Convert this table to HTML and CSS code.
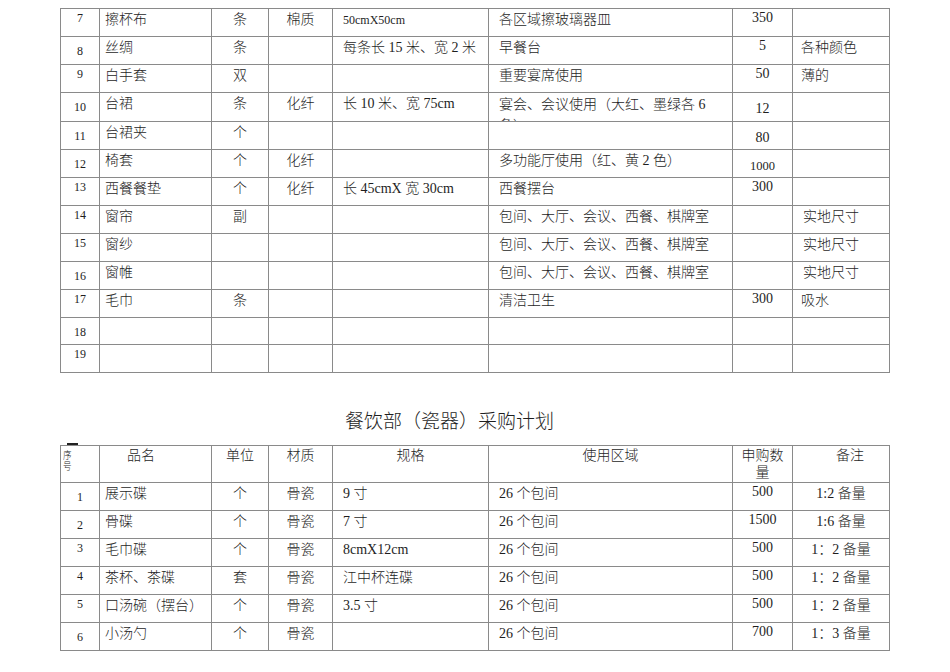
FILE: index.html
```html
<!DOCTYPE html>
<html lang="zh-CN">
<head>
<meta charset="utf-8">
<title>餐饮部采购计划</title>
<link rel="stylesheet" href="styles.css">
</head>
<body>
<div class="page">
  <table class="grid">
    <colgroup>
      <col class="w-seq"><col class="w-name"><col class="w-unit"><col class="w-mat"><col class="w-spec"><col class="w-area"><col class="w-qty"><col class="w-rem">
    </colgroup>
    <tbody>
      <tr><td class="seq sa">7</td><td class="name">擦杯布</td><td class="unit">条</td><td class="mat">棉质</td><td class="spec"><span class="small">50cmX50cm</span></td><td class="area">各区域擦玻璃器皿</td><td class="qty qa">350</td><td class="rem"></td></tr>
      <tr><td class="seq sb">8</td><td class="name">丝绸</td><td class="unit">条</td><td class="mat"></td><td class="spec">每条长 15 米、宽 2 米</td><td class="area">早餐台</td><td class="qty qa">5</td><td class="rem">各种颜色</td></tr>
      <tr><td class="seq sa">9</td><td class="name">白手套</td><td class="unit">双</td><td class="mat"></td><td class="spec"></td><td class="area">重要宴席使用</td><td class="qty qa">50</td><td class="rem">薄的</td></tr>
      <tr><td class="seq sb">10</td><td class="name">台裙</td><td class="unit">条</td><td class="mat">化纤</td><td class="spec">长 10 米、宽 75cm</td><td class="area"><div class="clip">宴会、会议使用（大红、墨绿各 6 条）</div></td><td class="qty qb">12</td><td class="rem"></td></tr>
      <tr><td class="seq sb">11</td><td class="name">台裙夹</td><td class="unit">个</td><td class="mat"></td><td class="spec"></td><td class="area"></td><td class="qty qb">80</td><td class="rem"></td></tr>
      <tr><td class="seq sb">12</td><td class="name">椅套</td><td class="unit">个</td><td class="mat">化纤</td><td class="spec"></td><td class="area">多功能厅使用（红、黄 2 色）</td><td class="qty qb"><span class="num-small">1000</span></td><td class="rem"></td></tr>
      <tr><td class="seq sa">13</td><td class="name">西餐餐垫</td><td class="unit">个</td><td class="mat">化纤</td><td class="spec">长 45cmX 宽 30cm</td><td class="area">西餐摆台</td><td class="qty qa">300</td><td class="rem"></td></tr>
      <tr><td class="seq sa">14</td><td class="name">窗帘</td><td class="unit">副</td><td class="mat"></td><td class="spec"></td><td class="area">包间、大厅、会议、西餐、棋牌室</td><td class="qty"></td><td class="rem rem-in">实地尺寸</td></tr>
      <tr><td class="seq sa">15</td><td class="name">窗纱</td><td class="unit"></td><td class="mat"></td><td class="spec"></td><td class="area">包间、大厅、会议、西餐、棋牌室</td><td class="qty"></td><td class="rem rem-in">实地尺寸</td></tr>
      <tr><td class="seq sb">16</td><td class="name">窗帷</td><td class="unit"></td><td class="mat"></td><td class="spec"></td><td class="area">包间、大厅、会议、西餐、棋牌室</td><td class="qty"></td><td class="rem rem-in">实地尺寸</td></tr>
      <tr><td class="seq sa">17</td><td class="name">毛巾</td><td class="unit">条</td><td class="mat"></td><td class="spec"></td><td class="area">清洁卫生</td><td class="qty qa">300</td><td class="rem">吸水</td></tr>
      <tr class="short"><td class="seq sb">18</td><td class="name"></td><td class="unit"></td><td class="mat"></td><td class="spec"></td><td class="area"></td><td class="qty"></td><td class="rem"></td></tr>
      <tr><td class="seq sa">19</td><td class="name"></td><td class="unit"></td><td class="mat"></td><td class="spec"></td><td class="area"></td><td class="qty"></td><td class="rem"></td></tr>
    </tbody>
  </table>

  <h2 class="title">餐饮部（瓷器）采购计划</h2>

  <div class="table-wrap">
    <span class="dash"></span>
    <table class="grid">
      <colgroup>
        <col class="w-seq"><col class="w-name"><col class="w-unit"><col class="w-mat"><col class="w-spec"><col class="w-area"><col class="w-qty"><col class="w-rem">
      </colgroup>
      <thead>
        <tr class="head">
          <th class="h-seq"><span class="seq-label">序<br>号</span></th>
          <th class="h-name">品名</th>
          <th class="h-mid">单位</th>
          <th class="h-mid">材质</th>
          <th class="h-mid">规格</th>
          <th class="h-mid">使用区域</th>
          <th class="h-qty">申购数量</th>
          <th class="h-rem">备注</th>
        </tr>
      </thead>
      <tbody>
        <tr><td class="seq sb">1</td><td class="name">展示碟</td><td class="unit">个</td><td class="mat">骨瓷</td><td class="spec">9 寸</td><td class="area">26 个包间</td><td class="qty qa">500</td><td class="rem rem-c">1:2 备量</td></tr>
        <tr><td class="seq sb">2</td><td class="name">骨碟</td><td class="unit">个</td><td class="mat">骨瓷</td><td class="spec">7 寸</td><td class="area">26 个包间</td><td class="qty qa">1500</td><td class="rem rem-c">1:6 备量</td></tr>
        <tr><td class="seq sa">3</td><td class="name">毛巾碟</td><td class="unit">个</td><td class="mat">骨瓷</td><td class="spec">8cmX12cm</td><td class="area">26 个包间</td><td class="qty qa">500</td><td class="rem rem-c">1：2 备量</td></tr>
        <tr><td class="seq sa">4</td><td class="name">茶杯、茶碟</td><td class="unit">套</td><td class="mat">骨瓷</td><td class="spec">江中杯连碟</td><td class="area">26 个包间</td><td class="qty qa">500</td><td class="rem rem-c">1：2 备量</td></tr>
        <tr><td class="seq sa">5</td><td class="name">口汤碗（摆台）</td><td class="unit">个</td><td class="mat">骨瓷</td><td class="spec">3.5 寸</td><td class="area">26 个包间</td><td class="qty qa">500</td><td class="rem rem-c">1：2 备量</td></tr>
        <tr><td class="seq sb">6</td><td class="name">小汤勺</td><td class="unit">个</td><td class="mat">骨瓷</td><td class="spec"></td><td class="area">26 个包间</td><td class="qty qa">700</td><td class="rem rem-c">1：3 备量</td></tr>
      </tbody>
    </table>
  </div>
</div>
</body>
</html>
```

FILE: styles.css
```css
html, body {
  margin: 0;
  padding: 0;
  background: #ffffff;
}

body {
  font-family: "Liberation Serif", "Noto Sans CJK SC", serif;
  color: #1e1e1e;
  font-size: 14px;
}

.page {
  padding: 8px 0 0 60px;
}

.grid {
  border-collapse: collapse;
  table-layout: fixed;
  width: 830px;
}

.grid td,
.grid th {
  border: 1px solid #8a8a8a;
  padding: 1px 4px 0 5px;
  vertical-align: top;
  line-height: 20px;
  font-weight: 300;
  text-align: left;
  overflow: hidden;
}

.grid tr { height: 28px; }
.grid tr.short { height: 27px; }

.w-seq { width: 39px; }
.w-name { width: 112px; }
.w-unit { width: 57px; }
.w-mat { width: 64px; }
.w-spec { width: 156px; }
.w-area { width: 244px; }
.w-qty { width: 60px; }
.w-rem { width: 97px; }

.grid td.seq {
  text-align: center;
  font-size: 12px;
  line-height: 16px;
  padding-left: 2px;
  padding-right: 2px;
}
.grid td.sa { padding-top: 1px; }
.grid td.sb { padding-top: 6px; }

.grid td.name { padding-left: 5px; }
.grid td.unit,
.grid td.mat { text-align: center; padding-left: 2px; padding-right: 2px; }
.grid td.spec { padding-left: 10px; }
.grid td.area { padding-left: 10px; padding-right: 17px; }

.grid td.qty {
  text-align: center;
  font-size: 14px;
  line-height: 16px;
  padding-left: 2px;
  padding-right: 2px;
}
.grid td.qa { padding-top: 1px; }
.grid td.qb { padding-top: 8px; }
.num-small { font-size: 12.5px; }

.grid td.rem { padding-left: 8px; }
.grid td.rem-in { padding-left: 10px; }
.grid td.rem-c { text-align: center; padding-left: 2px; padding-right: 2px; }

.small { font-size: 12px; }

.clip {
  height: 27px;
  overflow: hidden;
  line-height: 21px;
}

.title {
  margin: 37px 0 11px 285px;
  font-size: 19px;
  line-height: 24px;
  font-weight: 300;
  color: #1e1e1e;
}

.table-wrap {
  position: relative;
  width: 830px;
}

.dash {
  position: absolute;
  left: 7px;
  top: -2px;
  width: 11px;
  height: 2px;
  background: #222;
}

.grid tr.head { height: 37px; }

.grid th {
  line-height: 17px;
  padding-top: 1px;
}
.grid th.h-seq {
  padding: 5px 0 0 2px;
}
.seq-label {
  display: inline-block;
  font-size: 10px;
  line-height: 10.5px;
  transform: scaleX(0.85);
  transform-origin: left top;
}
.grid th.h-name { padding-left: 27px; }
.grid th.h-mid { text-align: center; padding-left: 2px; padding-right: 2px; }
.grid th.h-qty { text-align: center; padding-left: 8px; padding-right: 8px; }
.grid th.h-rem { text-align: center; padding-left: 20px; padding-right: 2px; }
```
